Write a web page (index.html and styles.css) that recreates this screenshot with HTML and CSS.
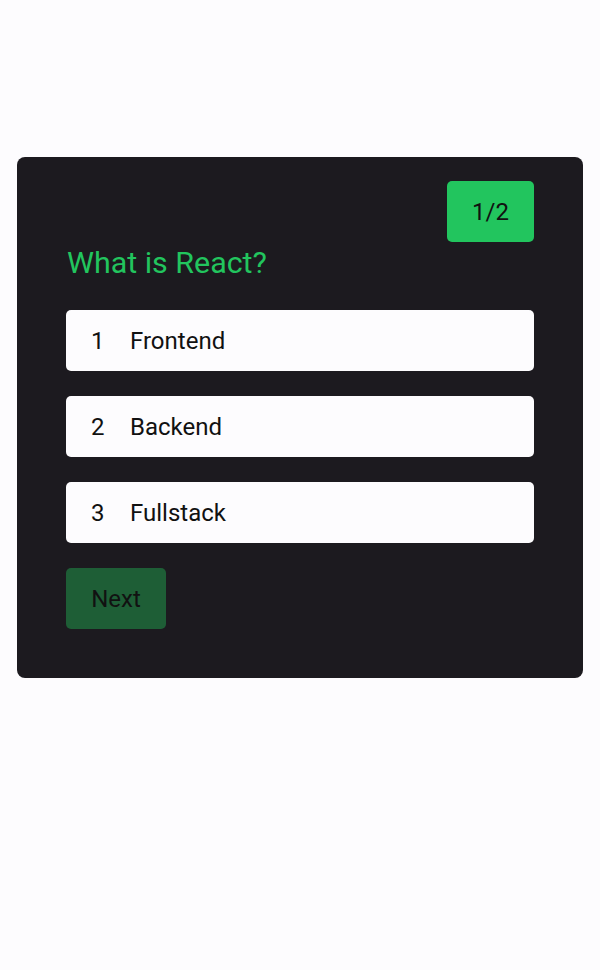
FILE: index.html
```html
<!DOCTYPE html>
<html>
<head>
<meta charset="utf-8">
<link rel="stylesheet" href="styles.css">
</head>
<body>
<div class="page">
  <div class="card">
    <div class="top">
      <div class="badge">1/2</div>
    </div>
    <h2 class="question">What is React?</h2>
    <div class="options">
      <div class="option"><span class="num">1</span><span class="label">Frontend</span></div>
      <div class="option"><span class="num">2</span><span class="label">Backend</span></div>
      <div class="option"><span class="num">3</span><span class="label">Fullstack</span></div>
    </div>
    <button class="next">Next</button>
  </div>
</div>
</body>
</html>
```
FILE: styles.css
```css
html, body {
  margin: 0;
  padding: 0;
  background: #fdfcfe;
  font-family: Roboto, "Noto Sans", sans-serif;
}
.page {
  padding: 157px 17px 0 17px;
}
.card {
  background: #1c1a1f;
  border-radius: 8px;
  padding: 24px 49px 49px 49px;
  display: flex;
  flex-direction: column;
}
.top {
  display: flex;
  justify-content: flex-end;
}
.badge {
  width: 87px;
  height: 61px;
  background: #22c55e;
  border-radius: 5px;
  display: flex;
  align-items: center;
  justify-content: center;
  font-size: 24px;
  color: #111;
}
.question {
  margin: 3px 0 30px 1px;
  font-size: 30.4px;
  font-weight: 400;
  color: #22c55e;
  line-height: 35px;
}
.options {
  display: flex;
  flex-direction: column;
  gap: 25px;
}
.option {
  height: 61px;
  background: #fdfcfe;
  border-radius: 5px;
  display: flex;
  align-items: center;
  padding: 0 25px;
  font-size: 24px;
  color: #111;
}
.num {
  width: 39px;
}
.next {
  margin-top: 25px;
  align-self: flex-start;
  width: 100px;
  height: 61px;
  border: none;
  border-radius: 5px;
  background: #1e5e36;
  color: #111;
  font-family: Roboto, "Noto Sans", sans-serif;
  font-size: 24px;
  padding: 0;
}
```
